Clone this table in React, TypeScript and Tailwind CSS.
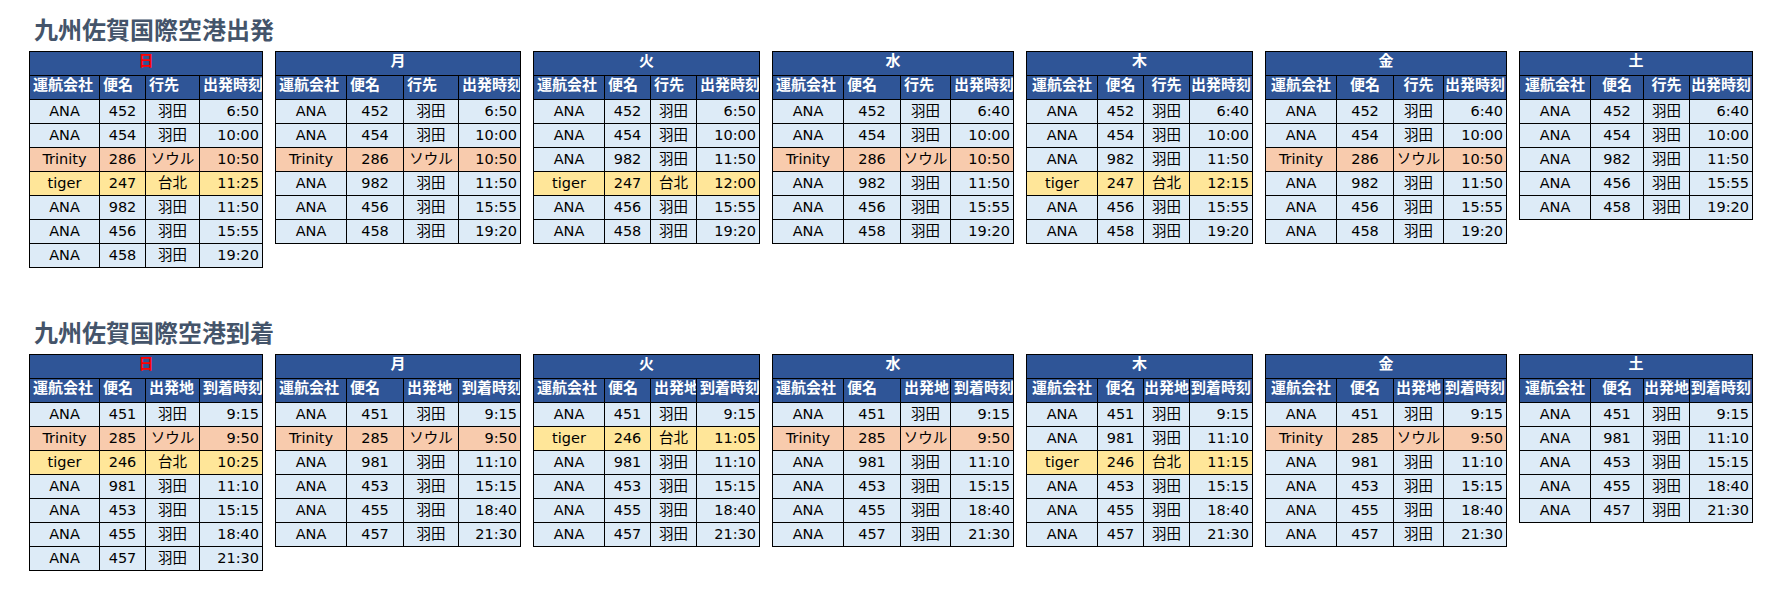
import React from "react";

type Row = [string, string, string, string];

interface DayTable {
  day: string;
  grid: string;
  center?: boolean;
  rows: Row[];
}

const FONT = "font-['DejaVu_Sans','Noto_Sans_CJK_JP',sans-serif]";
const TITLE_FONT = "font-['Noto_Sans_CJK_JP','DejaVu_Sans',sans-serif]";

const rowBg = (airline: string) => {
  if (airline === "Trinity") return "bg-[#F8CBAD]";
  if (airline === "tiger") return "bg-[#FFE699]";
  return "bg-[#DDEBF7]";
};

const departures: DayTable[] = [
  {
    day: "日",
    grid: "grid-cols-[70px_46px_54px_63px]",
    rows: [
      ["ANA", "452", "羽田", "6:50"],
      ["ANA", "454", "羽田", "10:00"],
      ["Trinity", "286", "ソウル", "10:50"],
      ["tiger", "247", "台北", "11:25"],
      ["ANA", "982", "羽田", "11:50"],
      ["ANA", "456", "羽田", "15:55"],
      ["ANA", "458", "羽田", "19:20"],
    ],
  },
  {
    day: "月",
    grid: "grid-cols-[71px_57px_55px_62px]",
    rows: [
      ["ANA", "452", "羽田", "6:50"],
      ["ANA", "454", "羽田", "10:00"],
      ["Trinity", "286", "ソウル", "10:50"],
      ["ANA", "982", "羽田", "11:50"],
      ["ANA", "456", "羽田", "15:55"],
      ["ANA", "458", "羽田", "19:20"],
    ],
  },
  {
    day: "火",
    grid: "grid-cols-[71px_46px_46px_63px]",
    rows: [
      ["ANA", "452", "羽田", "6:50"],
      ["ANA", "454", "羽田", "10:00"],
      ["ANA", "982", "羽田", "11:50"],
      ["tiger", "247", "台北", "12:00"],
      ["ANA", "456", "羽田", "15:55"],
      ["ANA", "458", "羽田", "19:20"],
    ],
  },
  {
    day: "水",
    grid: "grid-cols-[71px_57px_50px_63px]",
    rows: [
      ["ANA", "452", "羽田", "6:40"],
      ["ANA", "454", "羽田", "10:00"],
      ["Trinity", "286", "ソウル", "10:50"],
      ["ANA", "982", "羽田", "11:50"],
      ["ANA", "456", "羽田", "15:55"],
      ["ANA", "458", "羽田", "19:20"],
    ],
  },
  {
    day: "木",
    grid: "grid-cols-[71px_46px_46px_63px]",
    center: true,
    rows: [
      ["ANA", "452", "羽田", "6:40"],
      ["ANA", "454", "羽田", "10:00"],
      ["ANA", "982", "羽田", "11:50"],
      ["tiger", "247", "台北", "12:15"],
      ["ANA", "456", "羽田", "15:55"],
      ["ANA", "458", "羽田", "19:20"],
    ],
  },
  {
    day: "金",
    grid: "grid-cols-[71px_57px_50px_63px]",
    center: true,
    rows: [
      ["ANA", "452", "羽田", "6:40"],
      ["ANA", "454", "羽田", "10:00"],
      ["Trinity", "286", "ソウル", "10:50"],
      ["ANA", "982", "羽田", "11:50"],
      ["ANA", "456", "羽田", "15:55"],
      ["ANA", "458", "羽田", "19:20"],
    ],
  },
  {
    day: "土",
    grid: "grid-cols-[71px_53px_46px_63px]",
    center: true,
    rows: [
      ["ANA", "452", "羽田", "6:40"],
      ["ANA", "454", "羽田", "10:00"],
      ["ANA", "982", "羽田", "11:50"],
      ["ANA", "456", "羽田", "15:55"],
      ["ANA", "458", "羽田", "19:20"],
    ],
  },
];

const arrivals: DayTable[] = [
  {
    day: "日",
    grid: "grid-cols-[70px_46px_54px_63px]",
    rows: [
      ["ANA", "451", "羽田", "9:15"],
      ["Trinity", "285", "ソウル", "9:50"],
      ["tiger", "246", "台北", "10:25"],
      ["ANA", "981", "羽田", "11:10"],
      ["ANA", "453", "羽田", "15:15"],
      ["ANA", "455", "羽田", "18:40"],
      ["ANA", "457", "羽田", "21:30"],
    ],
  },
  {
    day: "月",
    grid: "grid-cols-[71px_57px_55px_62px]",
    rows: [
      ["ANA", "451", "羽田", "9:15"],
      ["Trinity", "285", "ソウル", "9:50"],
      ["ANA", "981", "羽田", "11:10"],
      ["ANA", "453", "羽田", "15:15"],
      ["ANA", "455", "羽田", "18:40"],
      ["ANA", "457", "羽田", "21:30"],
    ],
  },
  {
    day: "火",
    grid: "grid-cols-[71px_46px_46px_63px]",
    rows: [
      ["ANA", "451", "羽田", "9:15"],
      ["tiger", "246", "台北", "11:05"],
      ["ANA", "981", "羽田", "11:10"],
      ["ANA", "453", "羽田", "15:15"],
      ["ANA", "455", "羽田", "18:40"],
      ["ANA", "457", "羽田", "21:30"],
    ],
  },
  {
    day: "水",
    grid: "grid-cols-[71px_57px_50px_63px]",
    rows: [
      ["ANA", "451", "羽田", "9:15"],
      ["Trinity", "285", "ソウル", "9:50"],
      ["ANA", "981", "羽田", "11:10"],
      ["ANA", "453", "羽田", "15:15"],
      ["ANA", "455", "羽田", "18:40"],
      ["ANA", "457", "羽田", "21:30"],
    ],
  },
  {
    day: "木",
    grid: "grid-cols-[71px_46px_46px_63px]",
    center: true,
    rows: [
      ["ANA", "451", "羽田", "9:15"],
      ["ANA", "981", "羽田", "11:10"],
      ["tiger", "246", "台北", "11:15"],
      ["ANA", "453", "羽田", "15:15"],
      ["ANA", "455", "羽田", "18:40"],
      ["ANA", "457", "羽田", "21:30"],
    ],
  },
  {
    day: "金",
    grid: "grid-cols-[71px_57px_50px_63px]",
    center: true,
    rows: [
      ["ANA", "451", "羽田", "9:15"],
      ["Trinity", "285", "ソウル", "9:50"],
      ["ANA", "981", "羽田", "11:10"],
      ["ANA", "453", "羽田", "15:15"],
      ["ANA", "455", "羽田", "18:40"],
      ["ANA", "457", "羽田", "21:30"],
    ],
  },
  {
    day: "土",
    grid: "grid-cols-[71px_53px_46px_63px]",
    center: true,
    rows: [
      ["ANA", "451", "羽田", "9:15"],
      ["ANA", "981", "羽田", "11:10"],
      ["ANA", "453", "羽田", "15:15"],
      ["ANA", "455", "羽田", "18:40"],
      ["ANA", "457", "羽田", "21:30"],
    ],
  },
];

function Timetable({ table, heads }: { table: DayTable; heads: string[] }) {
  return (
    <div className={`grid ${table.grid} border-l border-t border-black`}>
      <div
        className={`col-span-4 h-6 border-r border-b border-black bg-[#2F5597] text-center text-[15px] leading-[18px] font-bold ${FONT} ${
          table.day === "日" ? "text-[#FF0000]" : "text-white"
        }`}
      >
        {table.day}
      </div>
      {heads.map((h) => (
        <div
          key={h}
          className={`h-6 overflow-x-hidden whitespace-nowrap border-r border-b border-black bg-[#2F5597] text-[15px] leading-[18px] font-bold text-white ${FONT} ${
            table.center ? "text-center" : "pl-[3px]"
          }`}
        >
          {h}
        </div>
      ))}
      {table.rows.map((r, i) => (
        <React.Fragment key={i}>
          {r.map((cell, j) => (
            <div
              key={j}
              className={`h-6 whitespace-nowrap border-r border-b border-black text-[14.5px] leading-[23px] text-black ${FONT} ${rowBg(
                r[0],
              )} ${j === 3 ? "pr-[3px] text-right" : "text-center"}`}
            >
              {cell}
            </div>
          ))}
        </React.Fragment>
      ))}
    </div>
  );
}

function Section({
  title,
  heads,
  tables,
}: {
  title: string;
  heads: string[];
  tables: DayTable[];
}) {
  return (
    <section>
      <h1
        className={`h-[51px] pl-[5px] pt-[17px] text-[24px] leading-[24px] font-bold text-[#44546A] ${TITLE_FONT}`}
      >
        {title}
      </h1>
      <div className="flex items-start gap-3">
        {tables.map((t) => (
          <Timetable key={t.day} table={t} heads={heads} />
        ))}
      </div>
    </section>
  );
}

export default function App() {
  return (
    <div className="min-h-screen bg-white pl-[29px]">
      <Section
        title="九州佐賀国際空港出発"
        heads={["運航会社", "便名", "行先", "出発時刻"]}
        tables={departures}
      />
      <div className="mt-[35px]">
        <Section
          title="九州佐賀国際空港到着"
          heads={["運航会社", "便名", "出発地", "到着時刻"]}
          tables={arrivals}
        />
      </div>
    </div>
  );
}
